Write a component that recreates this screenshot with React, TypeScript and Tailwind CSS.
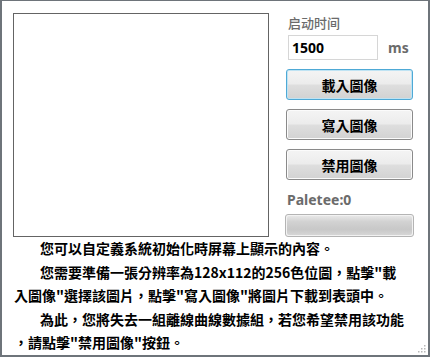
import React from 'react';

const cjk = { fontFamily: '"Noto Sans CJK TC", "Noto Sans CJK SC", sans-serif' };

const Btn = ({ label, focused }: { label: string; focused?: boolean }) => (
  <button
    className={`w-[127px] h-[31px] rounded-[3px] border text-[14px] font-bold text-black leading-none
      bg-[linear-gradient(to_bottom,#f4f4f4_0%,#ececec_48%,#dedede_52%,#d2d2d2_100%)]
      ${focused ? 'border-[#4ea9d6] shadow-[inset_0_0_0_1px_#bfe3f3]' : 'border-[#8a8a8a] shadow-[inset_0_0_0_1px_#fbfbfb]'}`}
    style={cjk}
  >
    {label}
  </button>
);

export default function App() {
  return (
    <div className="relative w-[430px] h-[357px] bg-white border-l-2 border-r-2 border-b-2 border-t border-[#6e747a] overflow-hidden">
      <div className="flex pt-[12px] pl-[11px]">
        {/* preview canvas 128x112 @2x */}
        <div className="w-[256px] h-[224px] border border-[#646464] bg-white shrink-0" />

        <div className="ml-[17px] w-[127px] flex flex-col">
          <div className="pl-[2px] h-[16px] mt-[2px] text-[13px] leading-[16px] text-[#6b6b6b] font-medium" style={{ fontFamily: '"Noto Sans CJK SC", sans-serif' }}>
            启动时间
          </div>
          <div className="flex items-center mt-[4px]">
            <div className="ml-[2px] w-[90px] h-[25px] border border-[#d6d6d6] flex items-center pl-[3px] text-[14px] font-bold text-black" style={{ fontFamily: '"Noto Sans", sans-serif' }}>
              1500
            </div>
            <span className="ml-[10px] text-[14px] font-bold text-[#6b6b6b]" style={{ fontFamily: '"Noto Sans", sans-serif' }}>ms</span>
          </div>
          <div className="mt-[9px] flex flex-col gap-[9px]">
            <Btn label="載入圖像" focused />
            <Btn label="寫入圖像" />
            <Btn label="禁用圖像" />
          </div>
          <div className="mt-[11px] pl-[1px] text-[14px] leading-[18px] font-bold text-[#6b6b6b]" style={{ fontFamily: '"Noto Sans", sans-serif' }}>
            Paletee:0
          </div>
          <div className="mt-[5px] -ml-[1px] w-[129px] h-[23px] rounded-[3px] border border-[#b4b4b4] p-[1px] bg-[#f2f2f2]">
            <div className="w-full h-full rounded-[2px] bg-[linear-gradient(to_bottom,#e6e6e6_0%,#d2d2d2_30%,#c8c8c8_70%,#d6d6d6_100%)]" />
          </div>
        </div>
      </div>

      <div className="pl-[12px] text-[14px] font-bold text-black leading-[23.5px] whitespace-nowrap" style={cjk}>
        <div className="indent-[26px]">您可以自定義系統初始化時屏幕上顯示的內容。</div>
        <div className="indent-[26px]">您需要準備一張分辨率為128x112的256色位圖，點擊"載</div>
        <div>入圖像"選擇該圖片，點擊"寫入圖像"將圖片下載到表頭中。</div>
        <div className="indent-[26px]">為此，您將失去一組離線曲線數據組，若您希望禁用該功能</div>
        <div>，請點擊"禁用圖像"按鈕。</div>
      </div>

      {/* resize grip */}
      <svg className="absolute right-[2px] bottom-[2px]" width="10" height="10" viewBox="0 0 10 10">
        {[[8, 2], [8, 5], [5, 5], [8, 8], [5, 8], [2, 8]].map(([x, y], i) => (
          <rect key={i} x={x} y={y} width="1.5" height="1.5" fill="#b8b8b8" />
        ))}
      </svg>
    </div>
  );
}
